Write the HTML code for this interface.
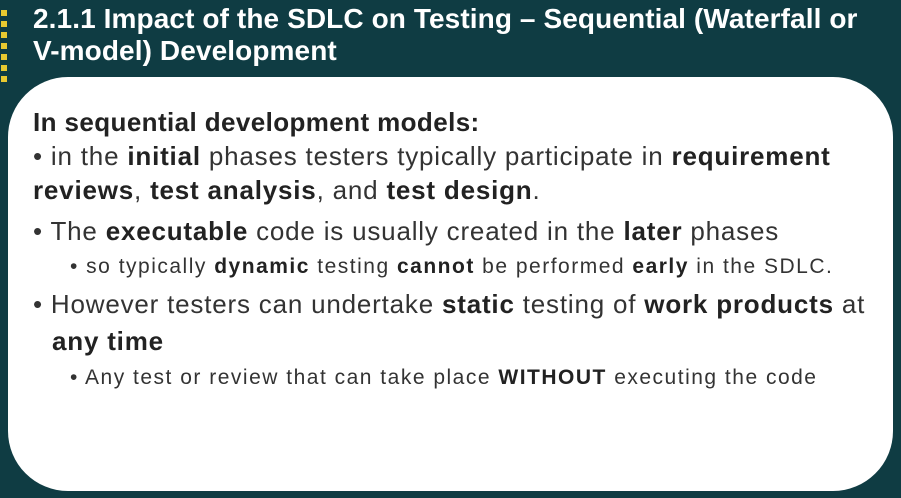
<!DOCTYPE html>
<html><head><meta charset="utf-8"><style>
body{margin:0;width:901px;height:498px;background:#0f3c43;position:relative;overflow:hidden;font-family:"Liberation Sans",sans-serif;}
.d{position:absolute;left:1px;width:6px;height:6px;background:#e8c930;}
.t{position:absolute;left:33px;top:3px;color:#fff;font-weight:bold;font-size:28px;line-height:32px;letter-spacing:0.1px;}
.box{position:absolute;left:8px;top:77px;width:885px;height:414px;background:#fff;border-radius:60px;}
.l{position:absolute;color:#333;white-space:nowrap;}
.big{font-size:26px;letter-spacing:0.8px;}
.sm{font-size:21px;letter-spacing:1.5px;}
b{font-weight:bold;color:#222}
</style></head><body>
<div class="d" style="top:10px"></div><div class="d" style="top:21px"></div><div class="d" style="top:32px"></div><div class="d" style="top:43px"></div><div class="d" style="top:54px"></div><div class="d" style="top:65px"></div><div class="d" style="top:76px"></div>
<div class="t">2.1.1 Impact of the SDLC on Testing – Sequential (Waterfall or<br>V-model) Development</div>
<div class="box"></div>
<div class="l" style="left:33px;top:107px;font-size:26px;letter-spacing:0.4px;font-weight:bold;color:#222">In sequential development models:</div>
<div class="l big" style="left:33px;top:141px">• in the <b>initial</b> phases testers typically participate in <b>requirement</b></div>
<div class="l big" style="left:33px;top:175px"><b>reviews</b>, <b>test analysis</b>, and <b>test design</b>.</div>
<div class="l big" style="left:33px;top:216px">• The <b>executable</b> code is usually created in the <b>later</b> phases</div>
<div class="l sm" style="left:70px;top:255px">• so typically <b>dynamic</b> testing <b>cannot</b> be performed <b>early</b> in the SDLC.</div>
<div class="l big" style="left:33px;top:289px">• However testers can undertake <b>static</b> testing of <b>work products</b> at</div>
<div class="l big" style="left:52px;top:326px"><b>any time</b></div>
<div class="l sm" style="left:70px;top:366px">• Any test or review that can take place <b>WITHOUT</b> executing the code</div>
</body></html>
